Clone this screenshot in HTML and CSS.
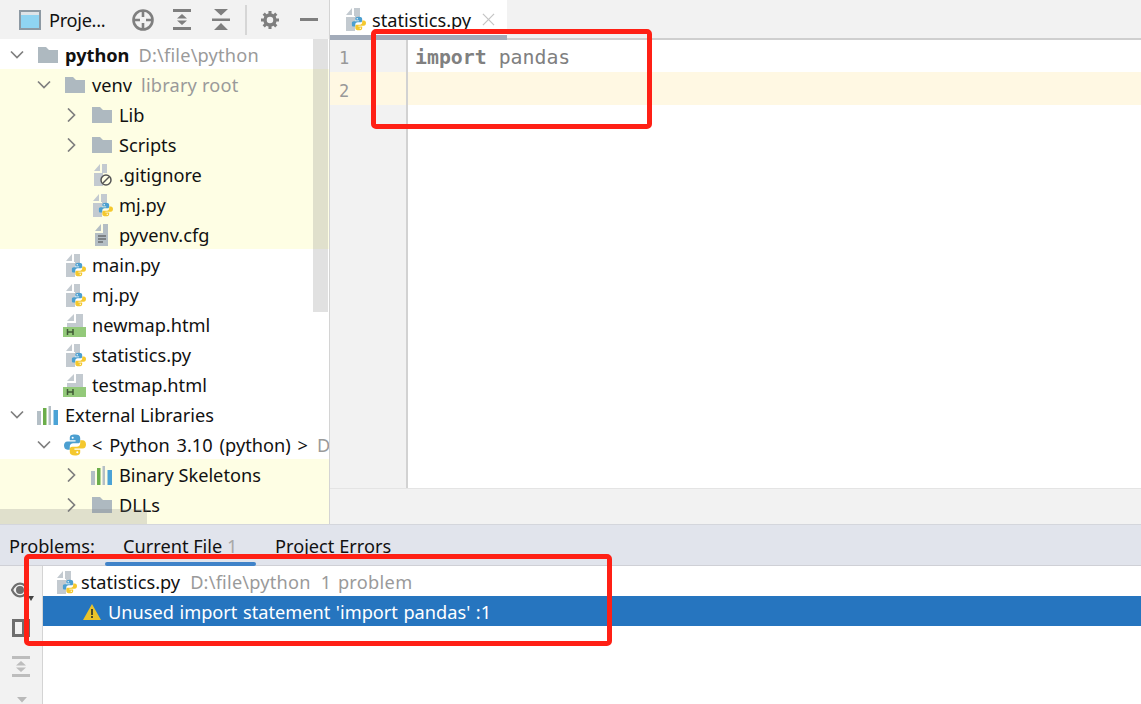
FILE: index.html
```html
<!DOCTYPE html>
<html lang="en">
<head>
<meta charset="utf-8">
<title>statistics.py</title>
<link rel="stylesheet" href="styles.css">
</head>
<body>
<svg class="defs" width="0" height="0" aria-hidden="true">
  <defs>
    <symbol id="folder" viewBox="0 0 22 20"><path d="M1 2h8l3 3h9v13H1z" fill="#aeb9c0"/></symbol>
    <symbol id="chev-d" viewBox="0 0 14 14"><path d="M1 3.500l6 6 6-6" fill="none" stroke="#7f7f7f" stroke-width="1.700"/></symbol>
    <symbol id="chev-r" viewBox="0 0 14 14"><path d="M4 .5l6.500 6.500-6.500 6.500" fill="none" stroke="#7f7f7f" stroke-width="1.700"/></symbol>
    <symbol id="snake" viewBox="0.500 1 19 18">
      <path d="M10 1c-3.500 0-4.500 1-4.500 3v2h5v1H3.500C1.500 7 0.500 8.500 0.500 10.500s1 3.500 3 3.500H5.500v-2.500c0-1.800 1.200-3 3-3h4c1.300 0 2-.8 2-2V4c0-2-1.500-3-4.500-3z" fill="#4c9fd0"/>
      <path d="M10 19c3.500 0 4.500-1 4.500-3v-2h-5v-1h7c2 0 3-1.500 3-3.500s-1-3.500-3-3.500H14.500v2.500c0 1.800-1.200 3-3 3h-4c-1.300 0-2 .8-2 2V16c0 2 1.500 3 4.500 3z" fill="#f4c82e"/>
      <circle cx="8" cy="3.700" r=".9" fill="#fff"/><circle cx="12" cy="16.300" r=".9" fill="#fff"/>
    </symbol>
    <symbol id="pyfile" viewBox="0 0 20 23">
      <path d="M0 7l6-7v7z" fill="#c3cad0"/><path d="M8 0h6v8H8zM0 9h9v14H0z" fill="#c3cad0"/><path d="M9 8h5v3H9z" fill="#c3cad0"/>
      <svg x="5.500" y="8" width="14.500" height="15"><use href="#snake"/></svg>
    </symbol>
    <symbol id="htmlfile" viewBox="0 0 24 23">
      <path d="M4 7l7-7v7z" fill="#c3cad0"/><path d="M13 0h7v13h-7zM4 9h9v4H4z" fill="#c3cad0"/>
      <path d="M0 13h23v10H0z" fill="#93c97a"/><path d="M4.500 15v6M10 15v6M4.500 18H10" stroke="#3f5a35" stroke-width="1.500" fill="none"/>
    </symbol>
    <symbol id="bars" viewBox="0 0 22 20">
      <path d="M0 6h4v14H0z" fill="#b4bfc6"/><path d="M6 3h3.500v17H6z" fill="#6cae4b"/><path d="M11.500 1H14v19h-2.500z" fill="#b4bfc6"/><path d="M16.500 5H21v15h-4.500z" fill="#4ba3d6"/>
    </symbol>
    <symbol id="doc" viewBox="0 0 20 22"><path d="M3 7l6-7v7z" fill="#b4bec4"/><path d="M11 0h5v9h-5zM3 9h13v13H3z" fill="#b4bec4"/><path d="M6 12h8M6 15h8M6 18h5" stroke="#444" stroke-width="1.200"/></symbol>
    <symbol id="ignore" viewBox="0 0 22 22"><path d="M3 7l6-7v7z" fill="#c3cad0"/><path d="M11 0h5v9h-5zM3 9h9v13H3z" fill="#c3cad0"/><circle cx="15" cy="16" r="5" fill="#fefee4" stroke="#555" stroke-width="1.500"/><path d="M12 19l6-6" stroke="#555" stroke-width="1.500"/></symbol>
    <symbol id="expand" viewBox="0 0 18 21"><path d="M0 0h18v3H0zM0 18h18v3H0zM9 5l5 4.500H4zM9 16l-5-4.500h10z" fill="#7f7f7f"/></symbol>
    <symbol id="collapse" viewBox="0 0 18 21"><path d="M0 9.500h18v2.500H0zM2 0h14l-7 6.500zM9 14l7 7H2z" fill="#7f7f7f"/></symbol>
  </defs>
</svg>

<div class="app">
  <div class="top">
    <aside class="sidebar">
      <header class="toolbar">
        <svg class="win-icon" width="22" height="20" viewBox="0 0 22 20"><path d="M0 0h22v20H0z" fill="#8d99a3"/><path d="M2 5h18v13H2z" fill="#8fd4f2"/><path d="M2 2h18v3H2z" fill="#dfe4e8"/></svg>
        <span class="toolbar-title">Proje...</span>
        <svg class="tool tool-locate" width="22" height="22" viewBox="0 0 22 22"><circle cx="11" cy="11" r="9.500" fill="none" stroke="#7f7f7f" stroke-width="2.600"/><path d="M11 2v6M11 14v6M2 11h6M14 11h6" stroke="#7f7f7f" stroke-width="2.600"/></svg>
        <svg class="tool tool-expand" width="18" height="21"><use href="#expand"/></svg>
        <svg class="tool tool-collapse" width="18" height="21"><use href="#collapse"/></svg>
        <span class="tool-sep"></span>
        <svg class="tool tool-gear" width="18" height="18" viewBox="0 0 20 20"><circle cx="10" cy="10" r="5.500" fill="none" stroke="#7f7f7f" stroke-width="3.800"/><path d="M10 0v4M10 16v4M0 10h4M16 10h4M3 3l3 3M14 14l3 3M17 3l-3 3M6 14l-3 3" stroke="#7f7f7f" stroke-width="3.400"/></svg>
        <span class="tool-min"></span>
      </header>
      <div class="tree">
        <div class="row d0"><svg class="chev"><use href="#chev-d"/></svg><svg class="ico"><use href="#folder"/></svg><b class="name strong">python</b><span class="hint">D:\file\python</span></div>
        <div class="yellow">
          <div class="row d1"><svg class="chev"><use href="#chev-d"/></svg><svg class="ico"><use href="#folder"/></svg><span class="name">venv</span><span class="hint">library root</span></div>
          <div class="row d2"><svg class="chev"><use href="#chev-r"/></svg><svg class="ico"><use href="#folder"/></svg><span class="name">Lib</span></div>
          <div class="row d2"><svg class="chev"><use href="#chev-r"/></svg><svg class="ico"><use href="#folder"/></svg><span class="name">Scripts</span></div>
          <div class="row d2"><span class="chev"></span><svg class="ico"><use href="#ignore"/></svg><span class="name">.gitignore</span></div>
          <div class="row d2"><span class="chev"></span><svg class="ico ico-py"><use href="#pyfile"/></svg><span class="name">mj.py</span></div>
          <div class="row d2"><span class="chev"></span><svg class="ico"><use href="#doc"/></svg><span class="name">pyvenv.cfg</span></div>
        </div>
        <div class="row d1"><span class="chev"></span><svg class="ico ico-py"><use href="#pyfile"/></svg><span class="name">main.py</span></div>
        <div class="row d1"><span class="chev"></span><svg class="ico ico-py"><use href="#pyfile"/></svg><span class="name">mj.py</span></div>
        <div class="row d1"><span class="chev"></span><svg class="ico ico-wide"><use href="#htmlfile"/></svg><span class="name">newmap.html</span></div>
        <div class="row d1"><span class="chev"></span><svg class="ico ico-py"><use href="#pyfile"/></svg><span class="name">statistics.py</span></div>
        <div class="row d1"><span class="chev"></span><svg class="ico ico-wide"><use href="#htmlfile"/></svg><span class="name">testmap.html</span></div>
        <div class="row d0"><svg class="chev"><use href="#chev-d"/></svg><svg class="ico"><use href="#bars"/></svg><span class="name">External Libraries</span></div>
        <div class="row d1"><svg class="chev"><use href="#chev-d"/></svg><svg class="ico"><use href="#snake"/></svg><span class="name name-sdk">&lt; Python 3.10 (python) &gt;</span><span class="hint">D:</span></div>
        <div class="yellow yellow-fill">
          <div class="row d2"><svg class="chev"><use href="#chev-r"/></svg><svg class="ico"><use href="#bars"/></svg><span class="name">Binary Skeletons</span></div>
          <div class="row d2"><svg class="chev"><use href="#chev-r"/></svg><svg class="ico"><use href="#folder"/></svg><span class="name">DLLs</span></div>
        </div>
        <div class="vscroll"></div>
        <div class="hscroll"></div>
      </div>
    </aside>
    <main class="editor">
      <div class="tabs">
        <div class="tab"><svg class="tab-ico" width="20" height="23"><use href="#pyfile"/></svg><span>statistics.py</span><svg class="tab-x" width="13" height="13" viewBox="0 0 14 14"><path d="M1 1l12 12M13 1L1 13" stroke="#c4c4c4" stroke-width="1.300"/></svg></div>
      </div>
      <div class="code">
        <div class="gutter"><div class="num">1</div><div class="num num-cur">2</div></div>
        <div class="lines">
          <div class="line"><b class="kw">import</b> pandas</div>
          <div class="line line-cur"></div>
        </div>
      </div>
      <div class="statusbar"></div>
    </main>
  </div>
  <section class="problems">
    <header class="problems-head">
      <span class="ptitle">Problems:</span>
      <span class="ptab ptab-on">Current File <i class="count">1</i></span>
      <span class="ptab">Project Errors</span>
    </header>
    <div class="problems-body">
      <div class="strip">
        <svg class="eye" width="24" height="20" viewBox="0 0 24 20"><path d="M1 8c4-8.500 12-8.500 16 0-4 8.500-12 8.500-16 0z" fill="none" stroke="#6e6e6e" stroke-width="2.200"/><circle cx="9" cy="8" r="4" fill="#6e6e6e"/><path d="M17 14h6l-3 5z" fill="#444"/></svg>
        <svg class="layout" width="18" height="18" viewBox="0 0 18 18"><path d="M1.500 1.500h15v15h-15zM11.500 1.500v15" fill="none" stroke="#6e6e6e" stroke-width="3"/></svg>
        <svg class="fade" width="18" height="21"><use href="#expand"/></svg>
        <svg class="fade-arrow" width="10" height="6" viewBox="0 0 10 6"><path d="M0 0h10L5 5.500z" fill="#b9b9b9"/></svg>
      </div>
      <div class="plist">
        <div class="prow"><svg class="p-ico" width="20" height="23"><use href="#pyfile"/></svg><span class="name">statistics.py</span><span class="hint phint">D:\file\python</span><span class="hint pcount">1 problem</span></div>
        <div class="prow prow-sel"><svg class="warn" width="18" height="16" viewBox="0 0 18 16"><path d="M9 0l9 16H0z" fill="#e9c32a"/><path d="M8 5h2v6H8zM8 12h2v2H8z" fill="#4a4a2a"/></svg><span class="msg">Unused import statement 'import pandas' :1</span></div>
      </div>
    </div>
  </section>
</div>
<div class="mark mark-code"></div>
<div class="mark mark-prob"></div>
</body>
</html>
```
FILE: styles.css
```css
* { box-sizing: border-box; }
html, body { margin: 0; height: 100%; }
body { font-family: "Noto Sans", "Open Sans", sans-serif; font-size: 18.200px; color: #111; background: #fff; overflow: hidden; }
.defs { position: absolute; }
.app { display: flex; flex-direction: column; height: 704px; }
.top { display: flex; height: 524px; }
.sidebar { width: 330px; display: flex; flex-direction: column; border-right: 1px solid #d4d4d4; }
.toolbar { height: 39px; flex: none; display: flex; align-items: center; background: #f2f2f2; padding-left: 19px; }
.toolbar-title { margin-left: 8px; width: 83px; letter-spacing: -.3px; }
.tool { flex: none; }
.tool-expand { margin-left: 19px; }
.tool-collapse { margin-left: 21px; }
.tool-sep { width: 2px; height: 30px; background: #d6d6d6; margin-left: 15px; }
.tool-gear { margin-left: 14px; }
.tool-min { width: 18px; height: 3px; background: #7f7f7f; margin-left: 21px; }
.tree { position: relative; flex: 1; overflow: hidden; }
.row { height: 30px; display: flex; align-items: center; white-space: nowrap; padding-top: 2px; }
.d0 { padding-left: 10px; }
.d1 { padding-left: 37px; }
.d2 { padding-left: 64px; }
.chev { width: 14px; height: 14px; margin-right: 13px; flex: none; }
.ico { width: 22px; height: 22px; flex: none; margin-right: 6px; }
.ico-py { width: 20px; height: 23px; margin-left: 2px; }
.ico-wide { width: 24px; height: 23px; margin-left: -1px; margin-right: 5px; }
.strong { font-weight: 700; }
.hint { color: #9a9a9a; margin-left: 9px; letter-spacing: .2px; }
.name-sdk { word-spacing: 2.200px; }
.yellow { background: #fefee4; }
.yellow-fill { height: 70px; }
.vscroll { position: absolute; right: 1px; top: 0; width: 15px; height: 273px; background: rgba(120, 120, 120, .22); }
.hscroll { position: absolute; left: 0; bottom: 0; width: 147px; height: 15px; background: rgba(120, 120, 120, .22); }
.editor { flex: 1; display: flex; flex-direction: column; }
.tabs { height: 40px; flex: none; background: #f2f2f2; border-bottom: 2px solid #cfcfcf; }
.tab { width: 177px; height: 40px; display: flex; align-items: center; background: #fff; padding: 4px 0 0 16px; border-bottom: 5px solid #a2abb9; }
.tab-ico { margin-right: 6px; }
.tab-x { margin-left: 11px; }
.code { flex: 1; display: flex; }
.gutter { width: 78px; background: #f2f2f2; border-right: 2px solid #d2d2d2; flex: none; }
.num { height: 32px; padding-left: 9px; font-family: "DejaVu Sans Mono", monospace; font-size: 17px; line-height: 37px; color: #999; }
.num-cur { height: 33px; line-height: 38px; background: #fff8e3; }
.lines { flex: 1; }
.line { height: 32px; padding-left: 7px; font-family: "DejaVu Sans Mono", monospace; font-size: 19.850px; line-height: 35px; color: #808080; white-space: pre; }
.line-cur { height: 33px; background: #fff8e3; }
.kw { font-weight: 700; }
.statusbar { height: 36px; flex: none; background: #f2f2f2; border-top: 1px solid #e4e4e4; }
.problems { flex: 1; display: flex; flex-direction: column; }
.problems-head { height: 42px; flex: none; position: relative; display: flex; align-items: flex-end; padding: 0 0 7px 9px; background: #e1e4ec; border-bottom: 1px solid #cfd0d6; border-top: 1px solid #d4d6dc; }
.ptitle { width: 114px; }
.ptab { width: 152px; }
.ptab-on::after { content: ""; position: absolute; left: 105px; bottom: -1px; width: 151px; height: 4px; background: #4083c9; border-radius: 2px; }
.count { font-style: normal; color: #a8a8a8; }
.problems-body { flex: 1; display: flex; }
.strip { width: 43px; flex: none; border-right: 1px solid #d4d4d4; background: #f2f2f2; display: flex; flex-direction: column; align-items: flex-start; padding: 16px 0 0 11px; overflow: hidden; }
.eye, .layout, .fade, .fade-arrow { flex: none; }
.layout { margin-top: 17px; margin-left: 1px; }
.fade { margin-top: 19px; margin-left: 1px; opacity: .45; }
.fade-arrow { margin-top: 20px; margin-left: 6px; }
.plist { flex: 1; }
.prow { height: 30px; display: flex; align-items: center; padding: 2px 0 0 14px; white-space: nowrap; }
.p-ico { margin-right: 4px; }
.phint { margin-left: 10px; }
.pcount { word-spacing: 1.500px; letter-spacing: .3px; margin-left: 10px; }
.prow-sel { background: #2675bf; color: #fff; padding-left: 40px; }
.warn { margin-right: 7px; }
.msg { word-spacing: .8px; }
.mark { position: absolute; border: 5px solid #ff2015; border-radius: 5px; }
.mark-code { left: 371px; top: 29px; width: 281px; height: 100px; }
.mark-prob { left: 24px; top: 554px; width: 588px; height: 92px; }
```
